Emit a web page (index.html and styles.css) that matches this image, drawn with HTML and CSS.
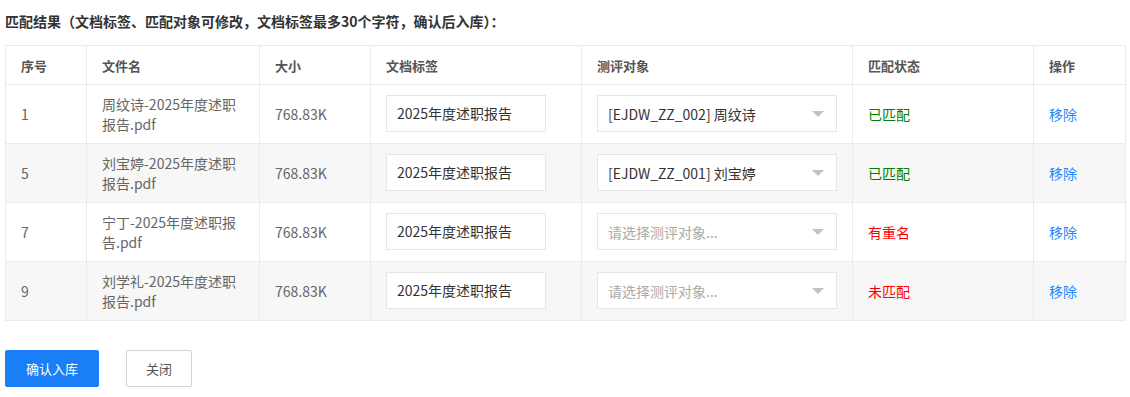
FILE: index.html
```html
<!DOCTYPE html>
<html lang="zh-CN">
<head>
<meta charset="utf-8">
<link rel="stylesheet" href="styles.css">
</head>
<body>
<div class="page">
  <div class="title">匹配结果（文档标签、匹配对象可修改，文档标签最多30个字符，确认后入库）：</div>
  <table class="grid">
    <colgroup>
      <col class="c1"><col class="c2"><col class="c3"><col class="c4"><col class="c5"><col class="c6"><col class="c7">
    </colgroup>
    <thead>
      <tr><th>序号</th><th>文件名</th><th>大小</th><th>文档标签</th><th>测评对象</th><th>匹配状态</th><th>操作</th></tr>
    </thead>
    <tbody>
      <tr>
        <td>1</td><td>周纹诗-2025年度述职报告.pdf</td><td>768.83K</td>
        <td><div class="input">2025年度述职报告</div></td>
        <td><div class="select"><span>[EJDW_ZZ_002] 周纹诗</span><i class="caret"></i></div></td>
        <td><span class="ok">已匹配</span></td><td><a class="link">移除</a></td>
      </tr>
      <tr class="alt">
        <td>5</td><td>刘宝婷-2025年度述职报告.pdf</td><td>768.83K</td>
        <td><div class="input">2025年度述职报告</div></td>
        <td><div class="select"><span>[EJDW_ZZ_001] 刘宝婷</span><i class="caret"></i></div></td>
        <td><span class="ok">已匹配</span></td><td><a class="link">移除</a></td>
      </tr>
      <tr>
        <td>7</td><td>宁丁-2025年度述职报告.pdf</td><td>768.83K</td>
        <td><div class="input">2025年度述职报告</div></td>
        <td><div class="select"><span class="ph">请选择测评对象...</span><i class="caret"></i></div></td>
        <td><span class="bad">有重名</span></td><td><a class="link">移除</a></td>
      </tr>
      <tr class="alt">
        <td>9</td><td>刘学礼-2025年度述职报告.pdf</td><td>768.83K</td>
        <td><div class="input">2025年度述职报告</div></td>
        <td><div class="select"><span class="ph">请选择测评对象...</span><i class="caret"></i></div></td>
        <td><span class="bad">未匹配</span></td><td><a class="link">移除</a></td>
      </tr>
    </tbody>
  </table>
  <div class="actions">
    <button class="btn primary">确认入库</button>
    <button class="btn plain">关闭</button>
  </div>
</div>
</body>
</html>
```
FILE: styles.css
```css
* { box-sizing: border-box; }
html, body { margin: 0; padding: 0; background: #fff; }
body { font-family: "Microsoft YaHei", "Noto Sans CJK SC", "Noto Sans", sans-serif; color: #666; font-size: 14px; }
.page { padding: 12px 5px 0 5px; width: 1130px; }
.title { font-size: 14px; font-weight: bold; color: #333; line-height: 18px; height: 33px; }
.grid { border-collapse: collapse; width: 1120px; table-layout: fixed; }
.c1 { width: 81px; } .c2 { width: 173px; } .c3 { width: 111px; } .c4 { width: 211px; }
.c5 { width: 271px; } .c6 { width: 181px; } .c7 { width: 92px; }
.grid th, .grid td { border: 1px solid #ebebeb; padding: 0 15px; text-align: left; vertical-align: middle; }
.grid th { height: 39px; font-size: 13px; font-weight: bold; color: #555; }
.grid td { height: 59px; line-height: 20px; padding-top: 0; padding-bottom: 1px; }
.grid tbody tr { height: 59px; }
.grid tr.alt td { background: #f7f7f7; }
.input { width: 160px; height: 37px; border: 1px solid #e6e6e6; background: #fff; color: #333; padding: 0 10px; line-height: 35px; }
.select { width: 240px; height: 37px; border: 1px solid #e6e6e6; background: #fff; color: #333; padding: 0 10px; display: flex; align-items: center; justify-content: space-between; }
.select .ph { color: #aaa; font-size: 14px; }
.caret { width: 0; height: 0; border-left: 6px solid transparent; border-right: 6px solid transparent; border-top: 6px solid #c2c2c2; margin-right: 2px; }
.ok { color: #008000; }
.bad { color: #ff0000; }
.link { color: #1e88ff; cursor: pointer; }
.actions { display: flex; gap: 27px; margin-top: 29px; }
.btn { height: 37px; font-size: 13px; font-family: inherit; padding: 0; border-radius: 2px; cursor: pointer; }
.btn.primary { width: 94px; background: #1a7ff6; border: 1px solid #1a7ff6; color: #fff; }
.btn.plain { width: 66px; background: #fff; border: 1px solid #d2d2d2; color: #555; }
```
